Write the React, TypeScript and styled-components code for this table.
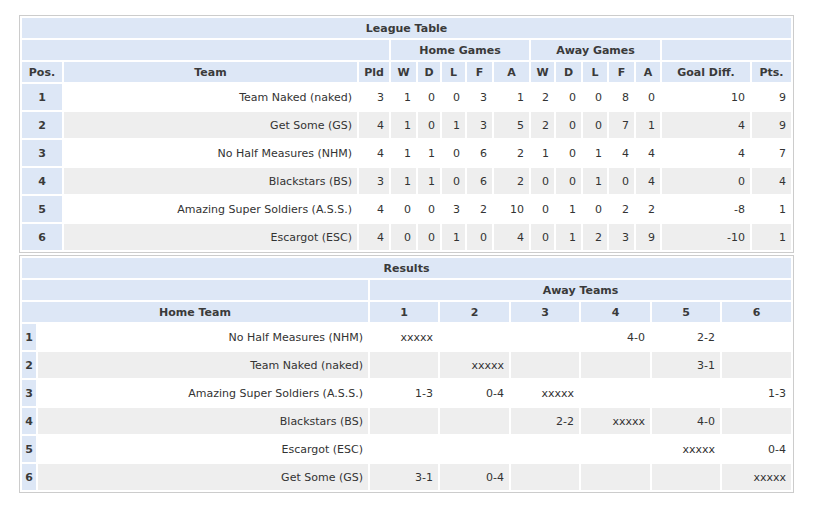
import React from "react";
import styled, { createGlobalStyle } from "styled-components";

const GlobalStyle = createGlobalStyle`
  html, body { margin: 0; padding: 0; background: #ffffff; }
  body { font-family: "DejaVu Sans", Verdana, sans-serif; font-size: 11px; color: #333333; }
`;

const Page = styled.div`
  display: flex;
  flex-direction: column;
  gap: 2px;
  padding: 15px 0 0 19px;
`;

const Board = styled.div<{ $cols: string; $rows: string }>`
  box-sizing: border-box;
  width: 775px;
  display: grid;
  grid-template-columns: ${(p) => p.$cols};
  grid-template-rows: ${(p) => p.$rows};
  gap: 2px;
  padding: 2px;
  border: 1px solid #cccccc;
  background: #ffffff;
`;

const Head = styled.div<{ $span?: number }>`
  grid-column: span ${(p) => p.$span ?? 1};
  background: #dde7f6;
  font-weight: bold;
  color: #3a3a3a;
  display: flex;
  align-items: center;
  justify-content: center;
  white-space: nowrap;
`;

const Pos = styled.div`
  background: #dde7f6;
  font-weight: bold;
  color: #3a3a3a;
  display: flex;
  align-items: center;
  justify-content: center;
`;

const Cell = styled.div<{ $alt: boolean }>`
  background: ${(p) => (p.$alt ? "#eeeeee" : "#ffffff")};
  display: flex;
  align-items: center;
  justify-content: flex-end;
  padding-right: 5px;
  white-space: nowrap;
  color: #333333;
`;

type Row = { team: string; nums: number[] };

const league: Row[] = [
  { team: "Team Naked (naked)", nums: [3, 1, 0, 0, 3, 1, 2, 0, 0, 8, 0, 10, 9] },
  { team: "Get Some (GS)", nums: [4, 1, 0, 1, 3, 5, 2, 0, 0, 7, 1, 4, 9] },
  { team: "No Half Measures (NHM)", nums: [4, 1, 1, 0, 6, 2, 1, 0, 1, 4, 4, 4, 7] },
  { team: "Blackstars (BS)", nums: [3, 1, 1, 0, 6, 2, 0, 0, 1, 0, 4, 0, 4] },
  { team: "Amazing Super Soldiers (A.S.S.)", nums: [4, 0, 0, 3, 2, 10, 0, 1, 0, 2, 2, -8, 1] },
  { team: "Escargot (ESC)", nums: [4, 0, 0, 1, 0, 4, 0, 1, 2, 3, 9, -10, 1] },
];

const results: { team: string; scores: string[] }[] = [
  { team: "No Half Measures (NHM)", scores: ["xxxxx", "", "", "4-0", "2-2", ""] },
  { team: "Team Naked (naked)", scores: ["", "xxxxx", "", "", "3-1", ""] },
  { team: "Amazing Super Soldiers (A.S.S.)", scores: ["1-3", "0-4", "xxxxx", "", "", "1-3"] },
  { team: "Blackstars (BS)", scores: ["", "", "2-2", "xxxxx", "4-0", ""] },
  { team: "Escargot (ESC)", scores: ["", "", "", "", "xxxxx", "0-4"] },
  { team: "Get Some (GS)", scores: ["3-1", "0-4", "", "", "", "xxxxx"] },
];

const leagueCols = "40px 293px 30px 25px 22px 23px 25px 35px 23px 25px 24px 25px 24px 88px 39px";
const resultCols = "14px 330px 68px 69px 68px 69px 68px 69px";
const rows = "20px 20px 20px repeat(6, 26px)";

const statHeads = ["Pld", "W", "D", "L", "F", "A", "W", "D", "L", "F", "A", "Goal Diff.", "Pts."];

export default function App() {
  return (
    <>
      <GlobalStyle />
      <Page>
        <Board $cols={leagueCols} $rows={rows}>
          <Head $span={15}>League Table</Head>
          <Head $span={3} />
          <Head $span={5}>Home Games</Head>
          <Head $span={5}>Away Games</Head>
          <Head $span={2} />
          <Head>Pos.</Head>
          <Head>Team</Head>
          {statHeads.map((h, i) => (
            <Head key={i}>{h}</Head>
          ))}
          {league.map((r, i) => (
            <React.Fragment key={r.team}>
              <Pos>{i + 1}</Pos>
              <Cell $alt={i % 2 === 1}>{r.team}</Cell>
              {r.nums.map((n, j) => (
                <Cell key={j} $alt={i % 2 === 1}>
                  {n}
                </Cell>
              ))}
            </React.Fragment>
          ))}
        </Board>
        <Board $cols={resultCols} $rows={rows}>
          <Head $span={8}>Results</Head>
          <Head $span={2} />
          <Head $span={6}>Away Teams</Head>
          <Head $span={2}>Home Team</Head>
          {[1, 2, 3, 4, 5, 6].map((n) => (
            <Head key={n}>{n}</Head>
          ))}
          {results.map((r, i) => (
            <React.Fragment key={r.team}>
              <Pos>{i + 1}</Pos>
              <Cell $alt={i % 2 === 1}>{r.team}</Cell>
              {r.scores.map((s, j) => (
                <Cell key={j} $alt={i % 2 === 1}>
                  {s}
                </Cell>
              ))}
            </React.Fragment>
          ))}
        </Board>
      </Page>
    </>
  );
}
